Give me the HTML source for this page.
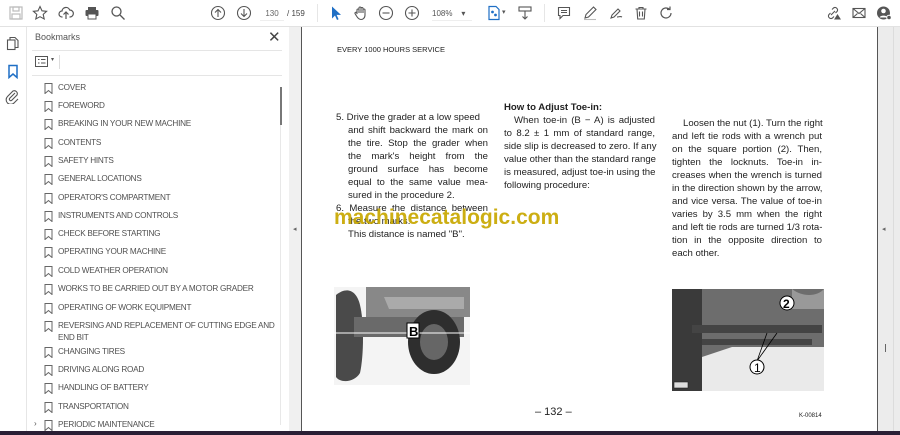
<!DOCTYPE html>
<html><head><meta charset="utf-8"><style>
*{margin:0;padding:0;box-sizing:border-box}
body{width:900px;height:435px;overflow:hidden;background:#fff;font-family:"Liberation Sans",sans-serif;position:relative}
.abs{position:absolute}
#tb{left:0;top:0;width:900px;height:27px;background:#fff;border-bottom:1px solid #e2e2e2}
.ic{position:absolute;top:5px}
#rail{left:0;top:27px;width:27px;height:404px;background:#fff;border-right:1px solid #e6e6e6}
#panel{left:27px;top:27px;width:262px;height:404px;background:#fff}
.bm{position:absolute;left:44px;font-size:8.2px;color:#505050;letter-spacing:-0.25px;line-height:12px}
.bm svg{position:absolute;left:0;top:1px}
.bm span{position:absolute;left:14px;white-space:nowrap}
#gutter{left:289px;top:27px;width:13px;height:404px;background:#f0f0f0;border-right:1px solid #555}
#page{left:302px;top:27px;width:575px;height:404px;background:#fff}
#rgut{left:877px;top:27px;width:23px;height:404px;background:#ececec;border-left:1px solid #555}
.t{position:absolute;font-size:9.6px;color:#222;line-height:13px;white-space:nowrap}
.j{text-align:justify;text-align-last:justify;display:block}
#bot{left:0;top:431px;width:900px;height:4px;background:#2a1f35}
</style></head><body>
<div id="tb" class="abs">
<svg class="ic" style="left:8px" width="16" height="16" viewBox="0 0 16 16" fill="none" stroke="#bbb" stroke-width="1.2"><rect x="2" y="2" width="12" height="12"/><rect x="5" y="2" width="6" height="4"/><rect x="4" y="9" width="8" height="5"/></svg>
<svg class="ic" style="left:32px" width="16" height="16" viewBox="0 0 16 16" fill="none" stroke="#555" stroke-width="1.1"><path d="M8 1.5l2 4.3 4.6.5-3.4 3.1 1 4.6L8 11.7 3.8 14l1-4.6L1.4 6.3 6 5.8z"/></svg>
<svg class="ic" style="left:58px" width="16" height="16" viewBox="0 0 16 16" fill="none" stroke="#555" stroke-width="1.2"><path d="M4.5 12H4a3 3 0 010-6 4 4 0 017.7-1A3 3 0 0112 12h-.5M8 14V7M5.5 9.5L8 7l2.5 2.5"/></svg>
<svg class="ic" style="left:84px" width="16" height="16" viewBox="0 0 16 16" fill="#555"><rect x="4" y="2" width="8" height="3"/><rect x="1.5" y="5" width="13" height="6" rx="1"/><rect x="4" y="9" width="8" height="5" fill="#fff" stroke="#555"/></svg>
<svg class="ic" style="left:110px" width="16" height="16" viewBox="0 0 16 16" fill="none" stroke="#555" stroke-width="1.3"><circle cx="6.5" cy="6.5" r="4.5"/><path d="M10 10l4.5 4.5"/></svg>
<svg class="ic" style="left:210px" width="16" height="16" viewBox="0 0 16 16" fill="none" stroke="#555" stroke-width="1.1"><circle cx="8" cy="8" r="6.5"/><path d="M8 12V4.5M5 7.5l3-3 3 3"/></svg>
<svg class="ic" style="left:236px" width="16" height="16" viewBox="0 0 16 16" fill="none" stroke="#555" stroke-width="1.1"><circle cx="8" cy="8" r="6.5"/><path d="M8 4v7.5M5 8.5l3 3 3-3"/></svg>
<div class="abs" style="left:260px;top:6px;width:24px;height:15px;font-size:8px;color:#666;line-height:15px;text-align:center;border-bottom:1px solid #eee">130</div>
<div class="abs" style="left:287px;top:6px;font-size:8px;color:#444;line-height:15px">/ 159</div>
<div class="abs" style="left:317px;top:4px;width:1px;height:18px;background:#e6e6e6"></div>
<svg class="ic" style="left:328px" width="16" height="16" viewBox="0 0 16 16" fill="#1f6fc5"><path d="M4 1.5v12l3-3 2 4.5 1.6-.7-2-4.4H13z"/></svg>
<svg class="ic" style="left:353px" width="16" height="16" viewBox="0 0 16 16" fill="none" stroke="#555" stroke-width="1.1"><path d="M4 9V5a1 1 0 012 0v3V3a1 1 0 012 0v5V3.5a1 1 0 012 0V8V5a1 1 0 012 0v5c0 3-2 4.5-4 4.5S5 13.5 3.5 11L2 8.5a1 1 0 011.8-.8z"/></svg>
<svg class="ic" style="left:378px" width="16" height="16" viewBox="0 0 16 16" fill="none" stroke="#555" stroke-width="1.1"><circle cx="8" cy="8" r="6.5"/><path d="M4.5 8h7"/></svg>
<svg class="ic" style="left:404px" width="16" height="16" viewBox="0 0 16 16" fill="none" stroke="#555" stroke-width="1.1"><circle cx="8" cy="8" r="6.5"/><path d="M4.5 8h7M8 4.5v7"/></svg>
<div class="abs" style="left:432px;top:6px;width:40px;height:15px;font-size:8px;color:#555;line-height:15px;border-bottom:1px solid #eee">108%&nbsp;&nbsp;&nbsp;&nbsp;▾</div>
<svg class="ic" style="left:486px" width="16" height="16" viewBox="0 0 16 16" fill="none" stroke="#1f6fc5" stroke-width="1.2"><path d="M3 1.5h7l3 3v10H3z"/><circle cx="6.5" cy="7" r=".8" fill="#1f6fc5"/><circle cx="9.5" cy="10" r=".8" fill="#1f6fc5"/></svg>
<div class="abs" style="left:502px;top:8px;font-size:7px;color:#555">▾</div>
<svg class="ic" style="left:517px" width="16" height="16" viewBox="0 0 16 16" fill="none" stroke="#555" stroke-width="1.1"><rect x="2" y="2" width="12" height="4"/><path d="M8 6v8M5.5 11.5L8 14l2.5-2.5"/></svg>
<div class="abs" style="left:544px;top:4px;width:1px;height:18px;background:#e6e6e6"></div>
<svg class="ic" style="left:556px" width="16" height="16" viewBox="0 0 16 16" fill="none" stroke="#555" stroke-width="1.1"><path d="M2.5 2.5h11v8H7l-3 3v-3H2.5z"/><path d="M5 5.5h6M5 7.5h6"/></svg>
<svg class="ic" style="left:582px" width="16" height="16" viewBox="0 0 16 16" fill="none" stroke="#555" stroke-width="1.1"><path d="M3 13l1-3.5 7.5-7.5 2.5 2.5L6.5 12z"/><path d="M2 14.5h12" stroke="#bbb"/></svg>
<svg class="ic" style="left:608px" width="16" height="16" viewBox="0 0 16 16" fill="none" stroke="#555" stroke-width="1.1"><path d="M3 13l1-3 6-6 2 2-6 6zM9 12c2 0 3-1 5 0"/></svg>
<svg class="ic" style="left:633px" width="16" height="16" viewBox="0 0 16 16" fill="none" stroke="#555" stroke-width="1.1"><path d="M2.5 4h11M6 4V2.5h4V4M4 4l.7 10h6.6L12 4M6.5 6.5v5M9.5 6.5v5"/></svg>
<svg class="ic" style="left:658px" width="16" height="16" viewBox="0 0 16 16" fill="none" stroke="#555" stroke-width="1.2"><path d="M13 8a5 5 0 11-1.5-3.6M12 1.5v3h-3"/></svg>
<svg class="ic" style="left:825px" width="16" height="16" viewBox="0 0 16 16" fill="none" stroke="#555" stroke-width="1.1"><path d="M6 10l4-4M7 4.5l1.5-1.5a2.5 2.5 0 013.5 3.5L10.5 8M9 11.5L7.5 13A2.5 2.5 0 014 9.5L5.5 8"/><path d="M10 14l2.5-4 2.5 4z" fill="#555"/></svg>
<svg class="ic" style="left:851px" width="16" height="16" viewBox="0 0 16 16" fill="none" stroke="#555" stroke-width="1.1"><rect x="2" y="3.5" width="12" height="9"/><path d="M2 3.5l6 5 6-5M2 12.5l4.5-4M14 12.5l-4.5-4"/></svg>
<svg class="ic" style="left:876px" width="16" height="16" viewBox="0 0 16 16" fill="#555"><circle cx="7.5" cy="8" r="6.5"/><circle cx="7.5" cy="6" r="2.3" fill="#fff"/><path d="M3.5 12.5c1-2.5 7-2.5 8 0" fill="#fff"/><circle cx="13" cy="12.5" r="2.3" fill="#555" stroke="#fff"/></svg>
</div>

<div id="rail" class="abs">
<svg class="abs" style="left:6px;top:9px" width="14" height="15" viewBox="0 0 14 15" fill="none" stroke="#555" stroke-width="1.1"><path d="M4 3.5V1.5h5l3 3v7H9"/><rect x="1.5" y="4" width="7.5" height="9.5"/></svg>
<svg class="abs" style="left:7px;top:37px" width="12" height="15" viewBox="0 0 12 15" fill="none" stroke="#1f6fc5" stroke-width="1.5"><path d="M2 1.5h8v12L6 10l-4 3.5z"/></svg>
<svg class="abs" style="left:5px;top:62px" width="15" height="15" viewBox="0 0 15 15" fill="none" stroke="#555" stroke-width="1.1"><path d="M10 4l-5.5 5.5a1.5 1.5 0 002 2L12 6a3 3 0 00-4-4L2.5 7.5a4.5 4.5 0 006.5 6.5l4-4"/></svg>
</div>

<div id="panel" class="abs">
<div class="abs" style="left:8px;top:5px;font-size:9px;color:#555">Bookmarks</div>
<div class="abs" style="left:241px;top:1px;font-size:15px;color:#444">✕</div>
<div class="abs" style="left:5px;top:23px;width:250px;height:1px;background:#e5e5e5"></div>
<svg class="abs" style="left:8px;top:29px" width="13" height="11" viewBox="0 0 13 11" fill="none" stroke="#555" stroke-width="1"><rect x=".5" y=".5" width="12" height="10"/><path d="M3 3.5h1.5M6 3.5h4.5M3 7h1.5M6 7h4.5"/></svg>
<div class="abs" style="left:24px;top:29px;font-size:6px;color:#555">▾</div>
<div class="abs" style="left:32px;top:28px;width:1px;height:14px;background:#ddd"></div>
<div class="abs" style="left:5px;top:48px;width:250px;height:1px;background:#e5e5e5"></div>
<div class="abs" style="left:253px;top:60px;width:2px;height:38px;background:#777"></div>
<div class="abs" style="left:253px;top:98px;width:1px;height:300px;background:#e8e8e8"></div>
</div>

<div class="bm" style="top:82px"><svg width="9" height="11" viewBox="0 0 9 11" fill="none" stroke="#666"><path d="M1 .5h7v10L4.5 7.5 1 10.5z"/></svg><span>COVER</span></div>
<div class="bm" style="top:100px"><svg width="9" height="11" viewBox="0 0 9 11" fill="none" stroke="#666"><path d="M1 .5h7v10L4.5 7.5 1 10.5z"/></svg><span>FOREWORD</span></div>
<div class="bm" style="top:118px"><svg width="9" height="11" viewBox="0 0 9 11" fill="none" stroke="#666"><path d="M1 .5h7v10L4.5 7.5 1 10.5z"/></svg><span>BREAKING IN YOUR NEW MACHINE</span></div>
<div class="bm" style="top:137px"><svg width="9" height="11" viewBox="0 0 9 11" fill="none" stroke="#666"><path d="M1 .5h7v10L4.5 7.5 1 10.5z"/></svg><span>CONTENTS</span></div>
<div class="bm" style="top:155px"><svg width="9" height="11" viewBox="0 0 9 11" fill="none" stroke="#666"><path d="M1 .5h7v10L4.5 7.5 1 10.5z"/></svg><span>SAFETY HINTS</span></div>
<div class="bm" style="top:173px"><svg width="9" height="11" viewBox="0 0 9 11" fill="none" stroke="#666"><path d="M1 .5h7v10L4.5 7.5 1 10.5z"/></svg><span>GENERAL LOCATIONS</span></div>
<div class="bm" style="top:192px"><svg width="9" height="11" viewBox="0 0 9 11" fill="none" stroke="#666"><path d="M1 .5h7v10L4.5 7.5 1 10.5z"/></svg><span>OPERATOR'S COMPARTMENT</span></div>
<div class="bm" style="top:210px"><svg width="9" height="11" viewBox="0 0 9 11" fill="none" stroke="#666"><path d="M1 .5h7v10L4.5 7.5 1 10.5z"/></svg><span>INSTRUMENTS AND CONTROLS</span></div>
<div class="bm" style="top:228px"><svg width="9" height="11" viewBox="0 0 9 11" fill="none" stroke="#666"><path d="M1 .5h7v10L4.5 7.5 1 10.5z"/></svg><span>CHECK BEFORE STARTING</span></div>
<div class="bm" style="top:246px"><svg width="9" height="11" viewBox="0 0 9 11" fill="none" stroke="#666"><path d="M1 .5h7v10L4.5 7.5 1 10.5z"/></svg><span>OPERATING YOUR MACHINE</span></div>
<div class="bm" style="top:265px"><svg width="9" height="11" viewBox="0 0 9 11" fill="none" stroke="#666"><path d="M1 .5h7v10L4.5 7.5 1 10.5z"/></svg><span>COLD WEATHER OPERATION</span></div>
<div class="bm" style="top:283px"><svg width="9" height="11" viewBox="0 0 9 11" fill="none" stroke="#666"><path d="M1 .5h7v10L4.5 7.5 1 10.5z"/></svg><span>WORKS TO BE CARRIED OUT BY A MOTOR GRADER</span></div>
<div class="bm" style="top:302px"><svg width="9" height="11" viewBox="0 0 9 11" fill="none" stroke="#666"><path d="M1 .5h7v10L4.5 7.5 1 10.5z"/></svg><span>OPERATING OF WORK EQUIPMENT</span></div>
<div class="bm" style="top:320px"><svg width="9" height="11" viewBox="0 0 9 11" fill="none" stroke="#666"><path d="M1 .5h7v10L4.5 7.5 1 10.5z"/></svg><span>REVERSING AND REPLACEMENT OF CUTTING EDGE AND<br>END BIT</span></div>
<div class="bm" style="top:346px"><svg width="9" height="11" viewBox="0 0 9 11" fill="none" stroke="#666"><path d="M1 .5h7v10L4.5 7.5 1 10.5z"/></svg><span>CHANGING TIRES</span></div>
<div class="bm" style="top:364px"><svg width="9" height="11" viewBox="0 0 9 11" fill="none" stroke="#666"><path d="M1 .5h7v10L4.5 7.5 1 10.5z"/></svg><span>DRIVING ALONG ROAD</span></div>
<div class="bm" style="top:382px"><svg width="9" height="11" viewBox="0 0 9 11" fill="none" stroke="#666"><path d="M1 .5h7v10L4.5 7.5 1 10.5z"/></svg><span>HANDLING OF BATTERY</span></div>
<div class="bm" style="top:401px"><svg width="9" height="11" viewBox="0 0 9 11" fill="none" stroke="#666"><path d="M1 .5h7v10L4.5 7.5 1 10.5z"/></svg><span>TRANSPORTATION</span></div>
<div class="bm" style="top:419px"><svg width="9" height="11" viewBox="0 0 9 11" fill="none" stroke="#666"><path d="M1 .5h7v10L4.5 7.5 1 10.5z"/></svg><span>PERIODIC MAINTENANCE</span></div>
<div class="abs" style="left:34px;top:419px;font-size:8px;color:#555">›</div>

<div id="gutter" class="abs"><div class="abs" style="left:4px;top:198px;font-size:7px;color:#666">◂</div></div>
<div id="rgut" class="abs"><div class="abs" style="left:4px;top:198px;font-size:7px;color:#666">◂</div><div class="abs" style="left:7px;top:317px;width:1px;height:8px;background:#666"></div><div class="abs" style="left:15px;top:0;width:1px;height:404px;background:#dcdcdc"></div></div>

<div id="page" class="abs"></div>
<div class="t" style="left:337px;top:43px;font-size:7.5px">EVERY 1000 HOURS SERVICE</div>

<div class="t" style="left:336px;top:111px">5. Drive the grader at a low speed</div>
<div class="t" style="left:348px;top:124px;width:140px"><span class="j">and shift backward the mark on</span></div>
<div class="t" style="left:348px;top:137px;width:140px"><span class="j">the tire. Stop the grader when</span></div>
<div class="t" style="left:348px;top:150px;width:140px"><span class="j">the mark's height from the</span></div>
<div class="t" style="left:348px;top:163px;width:140px"><span class="j">ground surface has become</span></div>
<div class="t" style="left:348px;top:176px;width:140px"><span class="j">equal to the same value mea-</span></div>
<div class="t" style="left:348px;top:189px">sured in the procedure 2.</div>
<div class="t" style="left:336px;top:202px;width:152px"><span class="j">6. Measure the distance between</span></div>
<div class="t" style="left:348px;top:215px">the two marks.</div>
<div class="t" style="left:348px;top:228px">This distance is named "B".</div>
<div class="t" style="left:334px;top:203px;font-size:21px;font-weight:bold;color:#c8a800;line-height:30px;opacity:.92">machinecatalogic.com</div>

<div class="t" style="left:504px;top:101px;font-weight:bold">How to Adjust Toe-in:</div>
<div class="t" style="left:504px;top:114px;width:151px;padding-left:10px"><span class="j">When toe-in (B − A) is adjusted</span></div>
<div class="t" style="left:504px;top:127px;width:151px"><span class="j">to 8.2 ± 1 mm of standard range,</span></div>
<div class="t" style="left:504px;top:140px;width:151px"><span class="j">side slip is decreased to zero. If any</span></div>
<div class="t" style="left:504px;top:153px;width:151px"><span class="j">value other than the standard range</span></div>
<div class="t" style="left:504px;top:166px;width:151px"><span class="j">is measured, adjust toe-in using the</span></div>
<div class="t" style="left:504px;top:179px">following procedure:</div>

<div class="t" style="left:672px;top:117px;width:150px;padding-left:11px"><span class="j">Loosen the nut (1). Turn the right</span></div>
<div class="t" style="left:672px;top:130px;width:150px"><span class="j">and left tie rods with a wrench put</span></div>
<div class="t" style="left:672px;top:143px;width:150px"><span class="j">on the square portion (2). Then,</span></div>
<div class="t" style="left:672px;top:156px;width:150px"><span class="j">tighten the locknuts. Toe-in in-</span></div>
<div class="t" style="left:672px;top:169px;width:150px"><span class="j">creases when the wrench is turned</span></div>
<div class="t" style="left:672px;top:182px;width:150px"><span class="j">in the direction shown by the arrow,</span></div>
<div class="t" style="left:672px;top:195px;width:150px"><span class="j">and vice versa. The value of toe-in</span></div>
<div class="t" style="left:672px;top:208px;width:150px"><span class="j">varies by 3.5 mm when the right</span></div>
<div class="t" style="left:672px;top:221px;width:150px"><span class="j">and left tie rods are turned 1/3 rota-</span></div>
<div class="t" style="left:672px;top:234px;width:150px"><span class="j">tion in the opposite direction to</span></div>
<div class="t" style="left:672px;top:247px">each other.</div>

<svg class="abs" style="left:334px;top:287px" width="136" height="98" viewBox="0 0 136 98">
<rect width="136" height="98" fill="#f4f4f4"/>
<rect x="32" y="0" width="104" height="30" fill="#888"/>
<path d="M50 10h80v12H55z" fill="#aaa"/>
<path d="M2 8c10-8 20-6 24 10s4 50 0 68c-6 10-20 10-24 4z" fill="#4a4a4a"/>
<path d="M20 30h110v20H20z" fill="#6a6a6a"/>
<ellipse cx="100" cy="55" rx="26" ry="32" fill="#2e2e2e"/>
<ellipse cx="100" cy="55" rx="14" ry="18" fill="#666"/>
<path d="M0 46h136" stroke="#fff" stroke-width="1"/>
<rect x="73" y="36" width="12" height="15" fill="#fff" stroke="#000"/>
<text x="75" y="49" font-size="13" font-weight="bold" font-family="Liberation Sans">B</text>
</svg>
<svg class="abs" style="left:672px;top:289px" width="152" height="102" viewBox="0 0 152 102">
<rect width="152" height="102" fill="#eaeaea"/>
<path d="M0 0h152v58H60l-30 10 0 34H0z" fill="#6d6d6d"/>
<path d="M0 0h30v102H0z" fill="#3a3a3a"/>
<path d="M20 36h130v8H20zM30 50h110v6H30z" fill="#444"/>
<path d="M120 0c10 8 25 8 32 0v20h-32z" fill="#999"/>
<circle cx="115" cy="14" r="7" fill="#fff" stroke="#000"/><text x="111" y="19" font-size="12" font-weight="bold" font-family="Liberation Sans">2</text>
<path d="M85 72L95 44M85 72l20-28" stroke="#000" stroke-width=".8"/>
<circle cx="85" cy="78" r="7" fill="#fff" stroke="#000"/><text x="82" y="83" font-size="12" font-family="Liberation Sans">1</text>
<rect x="2" y="93" width="14" height="6" fill="#ddd" stroke="#222" stroke-width=".6"/>
</svg>

<div class="t" style="left:535px;top:406px;font-size:11px">– 132 –</div>
<div class="t" style="left:799px;top:410px;font-size:6px">K-00814</div>
<div id="bot" class="abs"></div>
</body></html>
